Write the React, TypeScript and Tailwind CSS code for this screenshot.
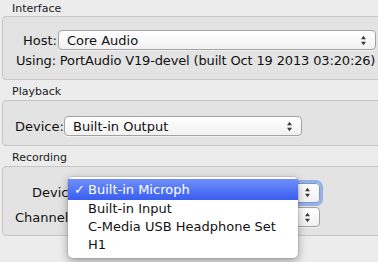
import React from "react";

const font = { fontFamily: '"DejaVu Sans", "Lucida Grande", sans-serif' };

function Arrows() {
  return (
    <svg width="7" height="11" viewBox="0 0 7 11" className="shrink-0">
      <path d="M3.5 0.8 L6 4.3 L1 4.3 Z" fill="#3a3a3a" />
      <path d="M3.5 10.2 L6 6.7 L1 6.7 Z" fill="#3a3a3a" />
    </svg>
  );
}

function Select({ text, className, focus }: { text: string; className: string; focus?: boolean }) {
  return (
    <div
      className={
        "flex items-center h-[20px] rounded-[4px] border bg-gradient-to-b from-[#ffffff] to-[#f1f1f1] pl-[8px] pr-[8px] " +
        (focus
          ? "border-[#7a9ad6] shadow-[0_0_0_3px_rgba(110,150,230,0.65)] "
          : "border-[#a3a3a3] shadow-[0_1px_0_rgba(255,255,255,0.5)] ") +
        className
      }
    >
      <span className="flex-1 text-[13px] leading-none text-[#111] truncate">{text}</span>
      <Arrows />
    </div>
  );
}

function Header({ children }: { children: React.ReactNode }) {
  return (
    <div className="h-[20px] pl-[12px] pt-[5px] text-[11px] leading-[14px] text-[#1a1a1a]">{children}</div>
  );
}

export default function App() {
  return (
    <div
      className="relative w-[378px] h-[262px] overflow-hidden bg-[#ececec] text-[#111]"
      style={font}
    >
      <div className="h-[16px] pl-[12px] pt-[2px] text-[11px] leading-[14px] text-[#1a1a1a]">Interface</div>
      <div className="ml-[2px] mr-[-8px] h-[64px] rounded-[4px] border border-[#c6c6c6] bg-[#e3e3e3] flex flex-col">
        <div className="flex items-center mt-[13px] h-[20px]">
          <span className="ml-[20px] w-[35px] text-[13px] leading-none">Host:</span>
          <Select text="Core Audio" className="w-[318px]" />
        </div>
        <div className="ml-[13px] mt-[3px] text-[13px] leading-[16px] whitespace-nowrap tracking-[-0.15px]">
          Using: PortAudio V19-devel (built Oct 19 2013 03:20:26)
        </div>
      </div>
      <Header>Playback</Header>
      <div className="ml-[2px] mr-[-8px] h-[46px] rounded-[4px] border border-[#c6c6c6] bg-[#e3e3e3] flex flex-col">
        <div className="flex items-center mt-[15px] h-[20px]">
          <span className="ml-[12px] w-[49px] text-[13px] leading-none whitespace-nowrap">Device:</span>
          <Select text="Built-in Output" className="w-[238px]" />
        </div>
      </div>
      <Header>Recording</Header>
      <div className="ml-[2px] mr-[-8px] h-[70px] rounded-[4px] border border-[#c6c6c6] bg-[#e3e3e3] flex flex-col">
        <div className="flex items-center mt-[16px] h-[19px]">
          <span className="ml-[29px] w-[52px] text-[13px] leading-none whitespace-nowrap">Device:</span>
          <Select text="" className="w-[236px] h-[19px]" focus />
        </div>
        <div className="flex items-center mt-[5px] h-[20px]">
          <span className="ml-[12px] w-[69px] text-[13px] leading-none whitespace-nowrap">Channels:</span>
          <Select text="" className="w-[236px]" />
        </div>
      </div>

      <div className="absolute left-[68px] top-[177px] w-[230px] h-[81px] rounded-[5px] bg-white shadow-[0_3px_10px_rgba(0,0,0,0.35),0_0_0_1px_rgba(0,0,0,0.08)] pt-[2px] text-[13px]">
        <div className="flex items-center h-[21px] bg-gradient-to-b from-[#6f8ef8] to-[#3a5cf2] text-white">
          <span className="w-[20px] pl-[6px] text-[13px]">✓</span>
          <span>Built-in Microph</span>
        </div>
        <div className="flex items-center h-[18px]">
          <span className="w-[20px]" />
          <span>Built-in Input</span>
        </div>
        <div className="flex items-center h-[18px]">
          <span className="w-[20px]" />
          <span>C-Media USB Headphone Set</span>
        </div>
        <div className="flex items-center h-[18px]">
          <span className="w-[20px]" />
          <span>H1</span>
        </div>
      </div>
    </div>
  );
}
